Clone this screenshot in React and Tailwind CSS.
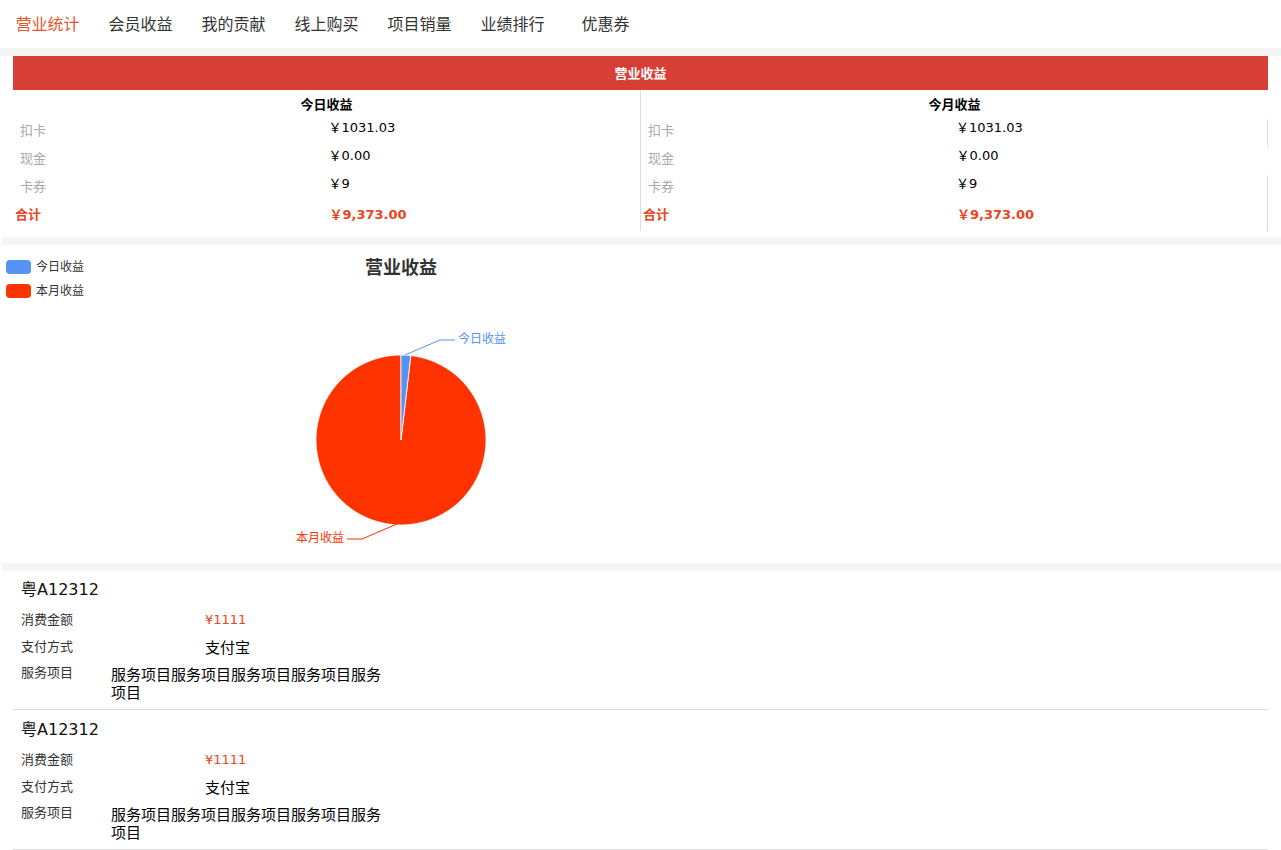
const tabs = ["营业统计", "会员收益", "我的贡献", "线上购买", "项目销量", "业绩排行", "优惠券"];

const rows = [
  { label: "扣卡", value: "￥1031.03" },
  { label: "现金", value: "￥0.00" },
  { label: "卡券", value: "￥9" },
];

const records = [
  { plate: "粤A12312", amount: "¥1111", pay: "支付宝", service: "服务项目服务项目服务项目服务项目服务项目" },
  { plate: "粤A12312", amount: "¥1111", pay: "支付宝", service: "服务项目服务项目服务项目服务项目服务项目" },
];

function IncomeColumn({ title, left, rightBorders }) {
  return (
    <div className={`flex-1 ${left ? "border-r border-[#dddddd]" : ""}`}>
      <div className="h-[29px] flex items-center justify-center text-[13px] font-bold text-black">{title}</div>
      {rows.map((r, i) => (
        <div
          key={r.label}
          className={`h-[28px] flex ${rightBorders && i !== 1 ? "border-r border-[#dddddd]" : ""}`}
        >
          <div className="w-1/2 pl-[7px] pt-[2px] leading-[20px] text-[13px] text-[#aaaaaa]">{r.label}</div>
          <div className="w-1/2 pl-[2px] pt-[1px] leading-[16px] text-[13px] text-black">{r.value}</div>
        </div>
      ))}
      <div className={`h-[28px] flex ${rightBorders ? "border-r border-[#dddddd]" : ""}`}>
        <div className="w-1/2 pl-[2px] leading-[24px] text-[13px] font-bold text-[#e8461e]">合计</div>
        <div className="w-1/2 pl-[3px] leading-[24px] text-[13px] font-bold text-[#e8461e]">￥9,373.00</div>
      </div>
    </div>
  );
}

function PieChart() {
  const cx = 401;
  const cy = 195;
  const r = 85;
  const a = (6.6 * Math.PI) / 180;
  const ex = cx + r * Math.sin(a);
  const ey = cy - r * Math.cos(a);
  return (
    <svg width="802" height="318" className="block">
      <rect x="6" y="15" width="25" height="14" rx="4" fill="#5793f3" />
      <text x="36" y="26" fontSize="12" fill="#333">今日收益</text>
      <rect x="6" y="39" width="25" height="14" rx="4" fill="#ff3300" />
      <text x="36" y="50" fontSize="12" fill="#333">本月收益</text>
      <text x="401" y="29" fontSize="18" fontWeight="bold" fill="#333" textAnchor="middle">营业收益</text>
      <path
        d={`M${cx} ${cy} L${ex} ${ey} A${r} ${r} 0 1 1 ${cx} ${cy - r} Z`}
        fill="#ff3300"
        stroke="#fff"
        strokeWidth="0.8"
      />
      <path
        d={`M${cx} ${cy} L${cx} ${cy - r} A${r} ${r} 0 0 1 ${ex} ${ey} Z`}
        fill="#5793f3"
        stroke="#fff"
        strokeWidth="0.8"
      />
      <polyline points="405,110 440,95 455,95" fill="none" stroke="#5793f3" strokeWidth="1" />
      <text x="458" y="98" fontSize="12" fill="#5793f3">今日收益</text>
      <polyline points="397,279 362,294 347,294" fill="none" stroke="#ff3300" strokeWidth="1" />
      <text x="344" y="297" fontSize="12" fill="#ff3300" textAnchor="end">本月收益</text>
    </svg>
  );
}

export default function App() {
  return (
    <div className="w-[1281px] min-h-[850px] bg-white font-['DejaVu_Sans','Noto_Sans_CJK_SC',sans-serif]">
      {/* tabs */}
      <div className="h-[48px] flex items-center pl-[1px]">
        {tabs.map((t, i) => (
          <div
            key={t}
            className={`w-[93px] text-center text-[16px] leading-[22px] pt-[2px] ${i === 0 ? "text-[#e8542a]" : "text-[#333333]"}`}
          >
            {t}
          </div>
        ))}
      </div>
      <div className="h-[8px] bg-[#f5f5f5]" />

      {/* income table */}
      <div className="px-[13px] pb-[6px]">
        <div className="h-[34px] pt-[2px] bg-[#d73e36] flex items-center justify-center text-[13px] font-bold text-white">
          营业收益
        </div>
        <div className="flex">
          <IncomeColumn title="今日收益" left />
          <IncomeColumn title="今月收益" rightBorders />
        </div>
      </div>
      <div className="h-[8px] ml-[2px] bg-[#f5f5f5]" />

      {/* chart */}
      <div className="h-[318px]">
        <PieChart />
      </div>
      <div className="h-[8px] ml-[2px] bg-[#f5f5f5]" />

      {/* records */}
      <div>
        {records.map((rec, i) => (
          <div
            key={i}
            className={`mx-[13px] border-b border-[#dddddd] pl-[8px] pb-[7px] ${i > 0 ? "pt-[1px]" : ""}`}
          >
            <div className="h-[35px] pt-[7px] leading-[24px] text-[16px] text-[#111111]">{rec.plate}</div>
            <div className="h-[28px] flex items-center text-[13px]">
              <div className="w-[184px] text-[#333333]">消费金额</div>
              <div className="text-[#e8461e]">{rec.amount}</div>
            </div>
            <div className="h-[26px] flex items-center">
              <div className="w-[184px] text-[13px] text-[#333333]">支付方式</div>
              <div className="text-[15px] text-black pt-[2px]">{rec.pay}</div>
            </div>
            <div className="flex">
              <div className="w-[90px] pt-[4px] leading-[18px] text-[13px] text-[#333333]">服务项目</div>
              <div className="w-[280px] pt-[6px] leading-[18px] text-[15px] text-black">{rec.service}</div>
            </div>
          </div>
        ))}
      </div>
    </div>
  );
}
